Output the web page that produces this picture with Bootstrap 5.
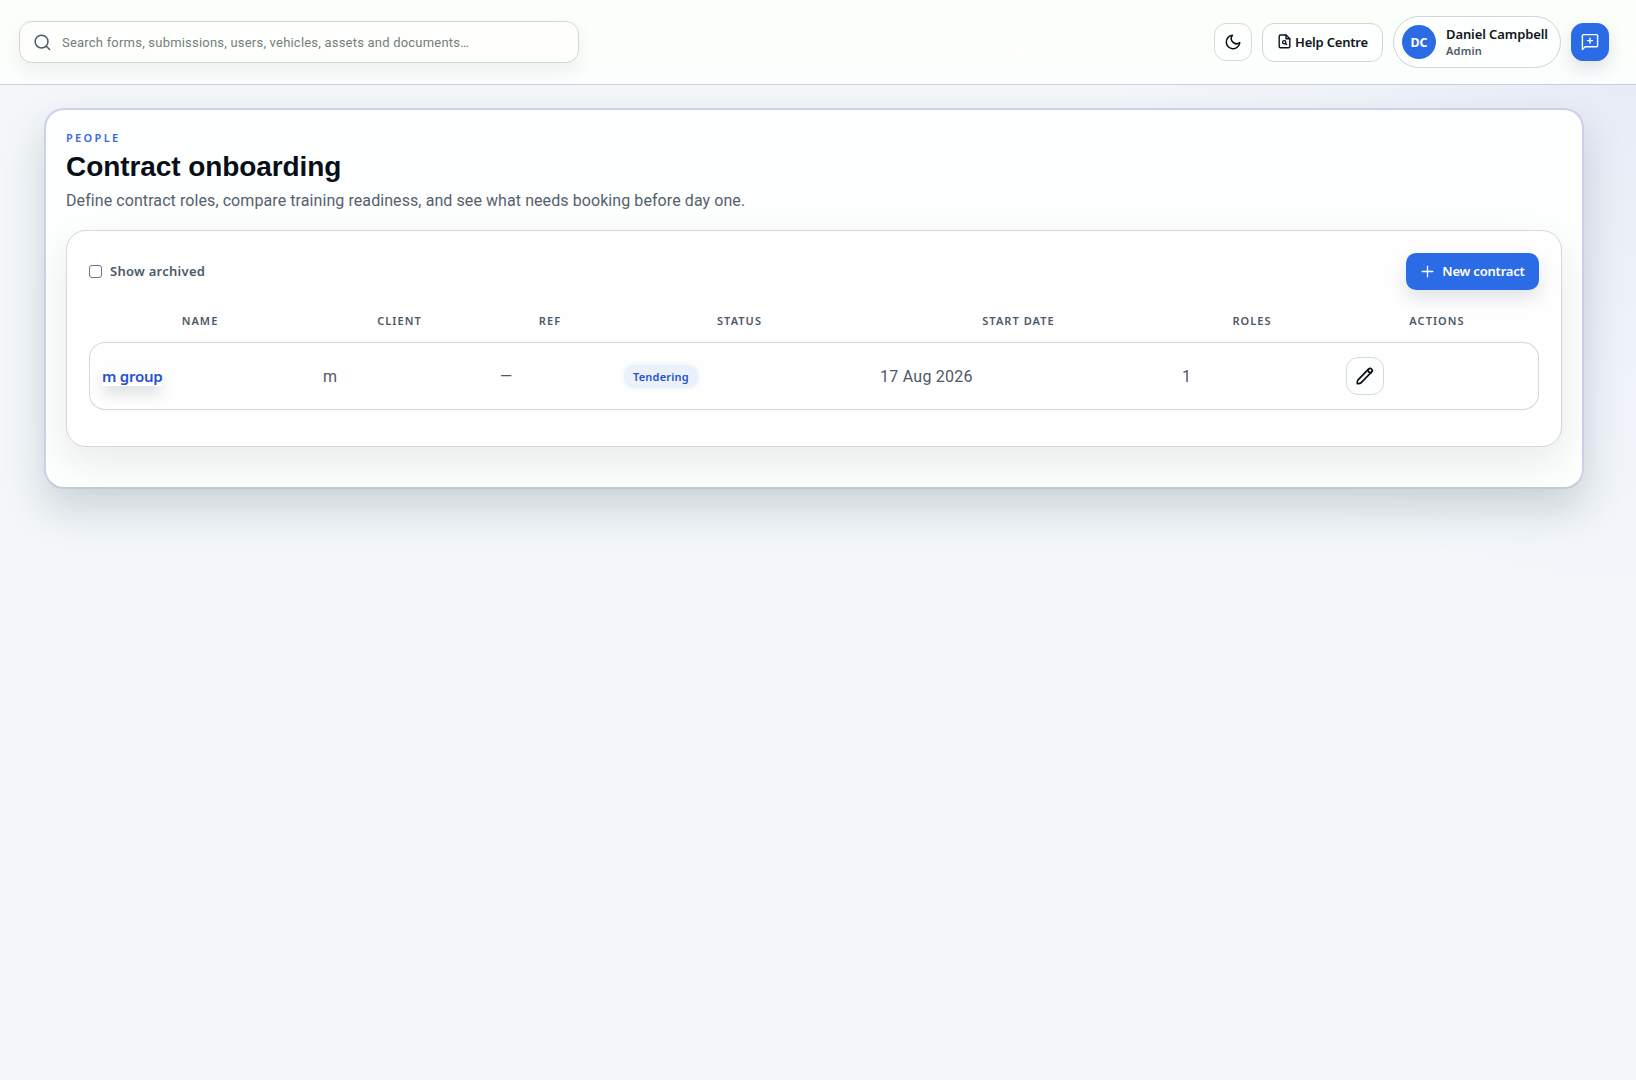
<!DOCTYPE html>
<html lang="en">
<head>
<meta charset="utf-8">
<meta name="viewport" content="width=device-width, initial-scale=1">
<title>Contract onboarding</title>
<link href="https://cdn.jsdelivr.net/npm/bootstrap@5.3.0/dist/css/bootstrap.min.css" rel="stylesheet">
<style>
  :root { --brand: #2b6ce6; --ink: #0d1620; --soft: #4d5966; --line: #d3d7de; }
  body {
    min-height: 100vh; color: var(--soft);
    font-family: Roboto, "Noto Sans", sans-serif; font-size: 16px;
    background: radial-gradient(circle 540px at 100% 60px, #e7ebf6, rgba(238,242,250,.7) 60%, rgba(243,247,250,0)) , #f3f7fa;
  }
  svg { display: block; fill: none; stroke: currentColor; stroke-linecap: round; stroke-linejoin: round; }
  .semi { font-family: "Noto Sans", sans-serif; font-weight: 600; }
  .topbar { height: 85px; padding: 0 27px 0 19px; background: linear-gradient(#fafffa, #fcfffb 60%, #fcfeff); border-bottom: 1px solid #c6ced8; }
  .search-box { width: 560px; height: 42px; padding: 0 14px; gap: 11px; border: 1px solid #d0d8d2; border-radius: 13px; background: #fdfffd; box-shadow: 0 9px 20px rgba(30,45,50,.07); }
  .search-box input { padding: 2px 0 0; border: 0; outline: 0; background: transparent; font-size: 13px; letter-spacing: .21px; color: #6f7a76; }
  .search-box input::placeholder { color: #737e79; opacity: 1; }
  .tools { gap: 10px; }
  .square-btn { width: 38px; height: 38px; padding: 0; border: 1px solid #d5dbd8; border-radius: 12px; background: #fdfffe; color: #080d12; }
  .help-btn { width: 121px; height: 39px; padding: 2px 0 0 15px; border: 1px solid #d0d7d2; border-radius: 12px; background: #fdfffe; color: #0d1520; font-size: 13px; letter-spacing: -.2px; }
  .help-btn svg { margin-top: -4px; }
  .user-pill { width: 168px; height: 52px; padding-left: 8px; gap: 10px; border: 1px solid #d0d6d4; background: #fdfffe; }
  .avatar { width: 34px; height: 34px; background: var(--brand); font: 700 12.5px "Noto Sans", sans-serif; }
  .user-name { font-size: 13px; line-height: 16px; letter-spacing: -.1px; color: var(--ink); }
  .user-role { font-size: 11px; line-height: 17px; letter-spacing: .2px; }
  .brand-btn { border-color: var(--brand); background: var(--brand); color: #fff; box-shadow: 0 8px 18px rgba(25,40,70,.13); }
  .page-card { margin: 23px 52px 0 44px; height: 381px; padding: 19px 20px 0; border: 2px solid #cdd0ec; border-bottom-color: #c4cbd3; border-radius: 20px; background: #fdfefe; box-shadow: 0 20px 42px rgba(30,42,50,.18); }
  .kicker { margin-top: 2px; font-size: 11px; line-height: 14px; letter-spacing: 2.35px; color: #3767de; }
  .page-title { margin-top: 5px; font: 700 28px/34px "Liberation Sans", sans-serif; letter-spacing: -.08px; color: #080e18; }
  .intro { margin: 5px 0 17px; line-height: 24px; letter-spacing: .08px; color: #55616d; }
  .panel { height: 217px; padding: 22px; border: 1px solid var(--line); border-radius: 20px; background: #fefefe; box-shadow: 0 16px 38px rgba(30,42,50,.09); }
  .form-check-input.archived { width: 13px; height: 13px; border: 1px solid #6f757b; border-radius: 3px; margin: 0; }
  .check-label { font-size: 13px; letter-spacing: .27px; }
  .new-btn { height: 37px; width: 133px; padding: 0 0 0 1px; gap: 8px; border: 0; border-radius: 10px; font-size: 13px; letter-spacing: -.2px; }
  .contracts { table-layout: fixed; border-collapse: separate; border-spacing: 0; width: 1450px; color: var(--soft); }
  .contracts th { height: 52px; padding: 11px 0 0 1px; text-align: center; font-size: 11px; letter-spacing: 1.05px; }
  .contracts td { height: 68px; padding: 0 13px; border: solid var(--line); border-width: 1px 0; vertical-align: middle; }
  .contracts td.plain { padding-top: 2px; }
  .contracts td:first-child { border-left-width: 1px; border-radius: 16px 0 0 16px; padding-left: 12px; }
  .contracts td:last-child { border-right-width: 1px; border-radius: 0 16px 16px 0; padding-left: 12px; }
  .start-date { letter-spacing: .25px; }
  .contracts .dash { padding-left: 12px; font-size: 15.5px; }
  .contract-link { display: inline-block; font-size: 15px; line-height: 19px; letter-spacing: -.24px; color: #2650cf; text-decoration: none; box-shadow: 0 9px 14px -1px rgba(25,40,60,.14); }
  .status-pill { display: inline-block; padding: 3px 9px; border-radius: 11px; font-size: 11px; line-height: 17px; letter-spacing: .2px; color: #2451cc; background: #ebf1fb; box-shadow: 0 0 4px 1px #eef3fa; }
</style>
</head>
<body>
<header class="topbar d-flex align-items-center justify-content-between">
  <label class="search-box d-flex align-items-center">
    <svg width="17" height="17" viewBox="0 0 18 18" stroke="#3f4a53" stroke-width="1.6"><circle cx="8" cy="8" r="6.8"/><path d="m13 13 3.5 3.5"/></svg>
    <input class="flex-grow-1" type="text" placeholder="Search forms, submissions, users, vehicles, assets and documents…">
  </label>
  <div class="tools d-flex align-items-center">
    <button class="btn square-btn d-flex align-items-center justify-content-center" aria-label="Dark mode"><svg width="18" height="18" viewBox="0 0 24 24" stroke-width="2"><path d="M21 12.8A9 9 0 1 1 11.2 3a7 7 0 0 0 9.8 9.8Z"/></svg></button>
    <button class="btn help-btn semi d-flex align-items-center gap-1"><svg width="13" height="15" viewBox="0 0 13 15" stroke-width="1.4"><path d="M8 1H2.5A1.3 1.3 0 0 0 1.2 2.3v10.2a1.3 1.3 0 0 0 1.3 1.3h8a1.3 1.3 0 0 0 1.3-1.3V4.7Z"/><path d="M8 1v3.7h3.8"/><circle cx="6.2" cy="8.2" r="1.6"/><path d="m7.4 9.4 1.2 1.2"/></svg>Help Centre</button>
    <div class="user-pill rounded-pill d-flex align-items-center">
      <span class="avatar rounded-circle text-white d-flex align-items-center justify-content-center">DC</span>
      <div><div class="user-name semi">Daniel Campbell</div><div class="user-role semi">Admin</div></div>
    </div>
    <button class="btn square-btn brand-btn d-flex align-items-center justify-content-center" aria-label="Feedback"><svg width="18" height="18" viewBox="0 0 18 18" stroke-width="1.4"><path d="M1.4 16.4V2.6a1 1 0 0 1 1-1h13.2a1 1 0 0 1 1 1v10.1a1 1 0 0 1-1 1H4.2Z"/><path d="M9 5.1v5M6.5 7.6h5"/></svg></button>
  </div>
</header>
<main class="page-card">
  <div class="kicker semi">PEOPLE</div>
  <h1 class="page-title mb-0">Contract onboarding</h1>
  <p class="intro">Define contract roles, compare training readiness, and see what needs booking before day one.</p>
  <section class="panel">
    <div class="d-flex align-items-center justify-content-between">
      <label class="d-flex align-items-center gap-2"><input class="form-check-input archived" type="checkbox"><span class="check-label semi">Show archived</span></label>
      <button class="btn brand-btn new-btn semi d-flex align-items-center justify-content-center"><svg width="13" height="13" viewBox="0 0 13 13" stroke-width="1.3"><path d="M6.5 1.2v10.6M1.2 6.5h10.6"/></svg>New contract</button>
    </div>
    <table class="contracts">
      <colgroup><col style="width:221px"><col style="width:178px"><col style="width:123px"><col style="width:256px"><col style="width:302px"><col style="width:165px"><col style="width:205px"></colgroup>
      <thead><tr><th class="semi">NAME</th><th class="semi">CLIENT</th><th class="semi">REF</th><th class="semi">STATUS</th><th class="semi">START DATE</th><th class="semi">ROLES</th><th class="semi">ACTIONS</th></tr></thead>
      <tbody><tr>
        <td class="plain"><a class="contract-link semi" href="#">m group</a></td>
        <td class="plain">m</td>
        <td class="plain dash">—</td>
        <td><span class="status-pill semi">Tendering</span></td>
        <td class="plain start-date">17 Aug 2026</td>
        <td class="plain">1</td>
        <td><button class="btn square-btn d-flex align-items-center justify-content-center" aria-label="Edit contract"><svg width="20" height="20" viewBox="0 0 20 20" stroke-width="1.7"><path d="M2.3 17.7c-.2-1.7 0-3 .8-3.900L13.500 3.100c.8-.8 2.200-.9 3-.1s.9 2.200.100 3L6.200 16.700c-.9.900-2.200 1.200-3.900 1Z"/><path d="M12.900 4c.3 1.600 1.200 2.600 3 2.900"/></svg></button></td>
      </tr></tbody>
    </table>
  </section>
</main>
<script src="https://cdn.jsdelivr.net/npm/bootstrap@5.3.0/dist/js/bootstrap.bundle.min.js"></script>
</body>
</html>
